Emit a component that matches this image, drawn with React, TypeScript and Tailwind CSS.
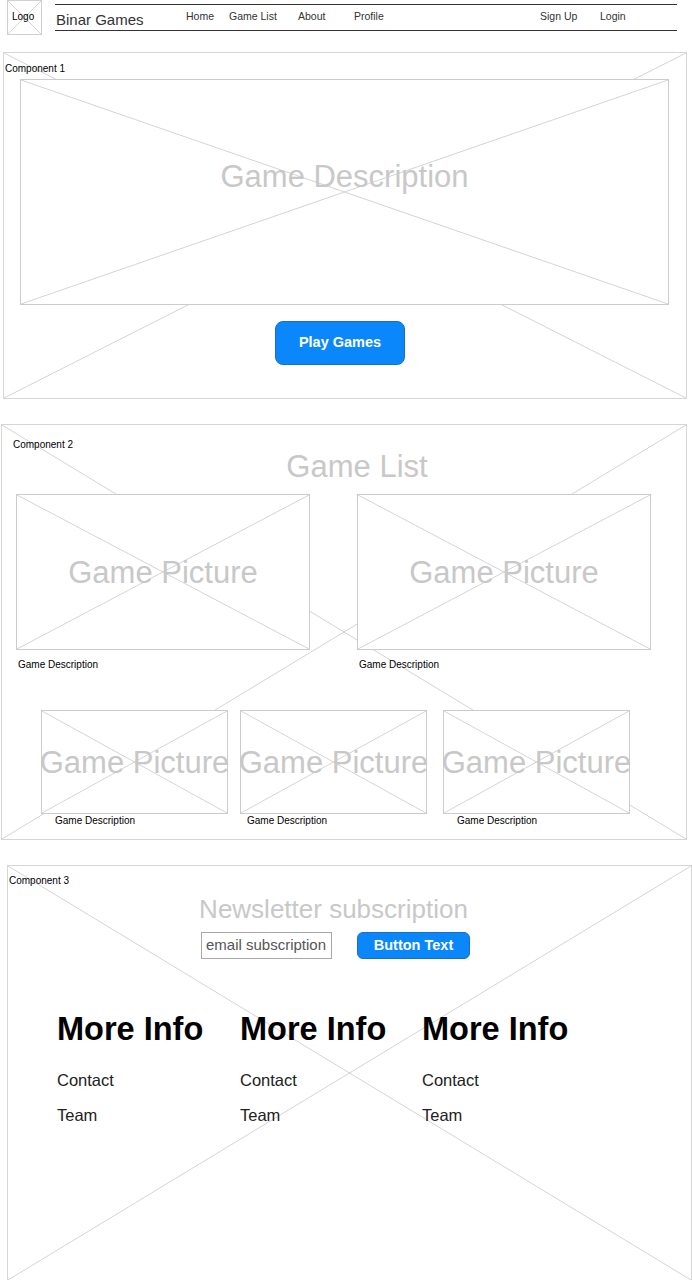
import React from "react";

const Cross = ({ color = "#d4d4d4" }: { color?: string }) => (
  <svg
    className="absolute inset-0 w-full h-full pointer-events-none"
    viewBox="0 0 100 100"
    preserveAspectRatio="none"
  >
    <line x1="0" y1="0" x2="100" y2="100" stroke={color} strokeWidth="1" vectorEffect="non-scaling-stroke" />
    <line x1="100" y1="0" x2="0" y2="100" stroke={color} strokeWidth="1" vectorEffect="non-scaling-stroke" />
  </svg>
);

const Placeholder = ({
  label,
  className,
  textClass = "",
}: {
  label: string;
  className: string;
  textClass?: string;
}) => (
  <div className={`relative bg-white border border-[#cccccc] flex items-center justify-center ${className}`}>
    <Cross />
    <span className={`relative whitespace-nowrap text-[31px] leading-none text-[#c8c8c8] ${textClass}`}>{label}</span>
  </div>
);

const BlueButton = ({ text, className }: { text: string; className: string }) => (
  <button
    className={`bg-[#0a87fb] border border-[#1a6fc4] text-white font-bold text-[14.5px] flex items-center justify-center ${className}`}
  >
    {text}
  </button>
);

const Header = () => (
  <div className="flex items-start h-[36px]">
    <div className="relative ml-[7px] w-[35px] h-[35px] border border-[#d0d0d0] bg-white">
      <Cross />
      <span className="absolute left-[4px] top-[10px] text-[10px] leading-[12px] text-black">Logo</span>
    </div>
    <div className="ml-[13px] mt-[4px] w-[622px] h-[27px] border-y border-[#333333] flex items-center text-[#333333]">
      <span className="w-[131px] pl-[1px] pt-[4px] text-[15px] leading-[18px]">Binar Games</span>
      <span className="w-[43px] text-[10.5px] pb-[2px]">Home</span>
      <span className="w-[69px] text-[10.5px] pb-[2px]">Game List</span>
      <span className="w-[56px] text-[10.5px] pb-[2px]">About</span>
      <span className="text-[10.5px] pb-[2px]">Profile</span>
      <span className="ml-auto w-[60px] text-[10.5px] pb-[2px]">Sign Up</span>
      <span className="w-[77px] text-[10.5px] pb-[2px]">Login</span>
    </div>
  </div>
);

const HeroSection = () => (
  <section className="relative mt-[16px] ml-[3px] w-[684px] h-[347px] border border-[#d6d6d6]">
    <Cross />
    <div className="relative flex flex-col items-start">
      <span className="pl-[1px] pt-[10px] text-[10px] leading-[12px] text-black">Component 1</span>
      <Placeholder
        label="Game Description"
        className="mt-[4px] ml-[16px] w-[649px] h-[226px]"
        textClass="mb-[31px]"
      />
      <BlueButton text="Play Games" className="mt-[16px] ml-[271px] w-[130px] h-[44px] rounded-[8px]" />
    </div>
  </section>
);

const SmallCard = ({ className, descOffset }: { className: string; descOffset: string }) => (
  <div className={`flex flex-col ${className}`}>
    <Placeholder label="Game Picture" className="w-[187px] h-[104px]" />
    <span className={`mt-[1px] text-[10px] leading-[12px] text-black ${descOffset}`}>Game Description</span>
  </div>
);

const GameListSection = () => (
  <section className="relative mt-[25px] ml-[1px] w-[686px] h-[416px] border border-[#d6d6d6]">
    <Cross />
    <div className="relative flex flex-col">
      <span className="pl-[11px] pt-[14px] text-[10px] leading-[12px] text-black">Component 2</span>
      <h2 className="pl-[26px] text-center text-[31px] leading-[31px] text-[#c8c8c8]">Game List</h2>
      <div className="mt-[12px] pl-[14px] flex gap-[47px]">
        {[0, 1].map((i) => (
          <div key={i} className="flex flex-col">
            <Placeholder label="Game Picture" className="w-[294px] h-[156px]" />
            <span className="mt-[9px] pl-[2px] text-[10px] leading-[12px] text-black">Game Description</span>
          </div>
        ))}
      </div>
      <div className="mt-[39px] flex">
        <SmallCard className="ml-[39px]" descOffset="pl-[14px]" />
        <SmallCard className="ml-[12px]" descOffset="pl-[7px]" />
        <SmallCard className="ml-[16px]" descOffset="pl-[14px]" />
      </div>
    </div>
  </section>
);

const InfoColumn = ({ className }: { className: string }) => (
  <div className={`flex flex-col ${className}`}>
    <h3 className="text-[32.5px] leading-[36px] font-bold text-black">More Info</h3>
    <span className="mt-[24px] text-[16.5px] leading-[19px] text-[#222222]">Contact</span>
    <span className="mt-[16px] text-[16.5px] leading-[19px] text-[#222222]">Team</span>
  </div>
);

const FooterSection = () => (
  <section className="relative mt-[25px] ml-[7px] w-[685px] h-[416px] border border-[#d6d6d6]">
    <Cross />
    <div className="relative flex flex-col">
      <span className="pl-[1px] pt-[9px] text-[10px] leading-[12px] text-black">Component 3</span>
      <h2 className="mt-[7px] pr-[32px] text-center text-[26px] leading-[30px] text-[#c8c8c8]">
        Newsletter subscription
      </h2>
      <div className="mt-[8px] ml-[193px] flex gap-[25px]">
        <div className="w-[131px] h-[27px] border border-[#a8a8a8] bg-white flex items-center pl-[4px] text-[15px] text-[#555555] whitespace-nowrap overflow-hidden">
          email subscription
        </div>
        <BlueButton text="Button Text" className="w-[113px] h-[27px] rounded-[6px]" />
      </div>
      <div className="mt-[52px] flex">
        <InfoColumn className="ml-[49px] w-[183px]" />
        <InfoColumn className="w-[182px]" />
        <InfoColumn className="" />
      </div>
    </div>
  </section>
);

export default function App() {
  return (
    <div className="w-[692px] h-[1280px] bg-white overflow-hidden font-['Liberation_Sans',Arial,sans-serif]">
      <Header />
      <HeroSection />
      <GameListSection />
      <FooterSection />
    </div>
  );
}
